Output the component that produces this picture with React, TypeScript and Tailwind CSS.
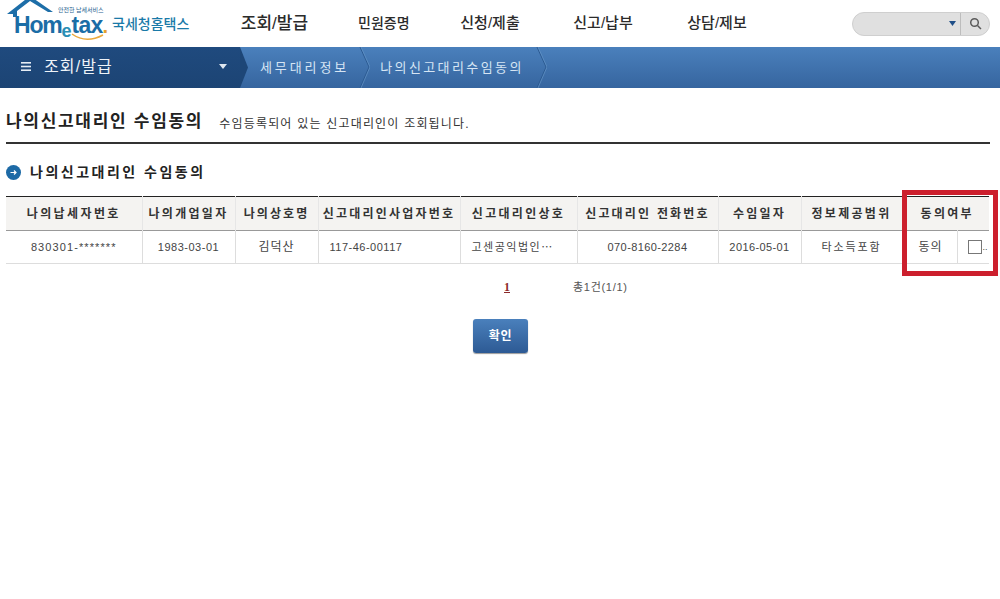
const kr = 'font-["Liberation_Sans","Noto_Sans_CJK_KR",sans-serif]';

const navItems = [
  { label: '조회/발급', cls: 'w-[71px] mr-[48px] text-[17px]' },
  { label: '민원증명', cls: 'w-[51px] mr-[50px] text-[14px]' },
  { label: '신청/제출', cls: 'w-[62px] mr-[51px] text-[15px]' },
  { label: '신고/납부', cls: 'w-[62px] mr-[52px] text-[15px]' },
  { label: '상담/제보', cls: 'w-[62px] text-[15px]' },
];

const headers = [
  { label: '나의납세자번호', track: 'tracking-[2.4px]' },
  { label: '나의개업일자', track: 'tracking-[2.3px]' },
  { label: '나의상호명', track: 'tracking-[2.1px]' },
  { label: '신고대리인사업자번호', track: 'tracking-[2.2px]' },
  { label: '신고대리인상호', track: 'tracking-[2.3px]' },
  { label: '신고대리인 전화번호', track: 'tracking-[2.2px]' },
  { label: '수임일자', track: 'tracking-[2.2px]' },
  { label: '정보제공범위', track: 'tracking-[2.3px]' },
];

const colWidths = ['w-[136px]', 'w-[93px]', 'w-[83px]', 'w-[142px]', 'w-[117px]', 'w-[141px]', 'w-[83px]', 'w-[101px]', 'w-[55px]', 'w-[32px]'];

const cells = [
  { text: '830301-*******', cls: 'text-center tracking-[1.1px]' },
  { text: '1983-03-01', cls: 'text-center tracking-[0.5px]' },
  { text: '김덕산', cls: 'text-center text-[12px] tracking-[1px]' },
  { text: '117-46-00117', cls: 'pl-[11px] text-left tracking-[0.5px]' },
  { text: '고센공익법인⋯', cls: 'pl-[11px] text-left tracking-[1.5px]' },
  { text: '070-8160-2284', cls: 'text-center tracking-[0.4px]' },
  { text: '2016-05-01', cls: 'text-center tracking-[0.4px]' },
  { text: '타소득포함', cls: 'text-center tracking-[1.9px]' },
];

function Logo() {
  return (
    <div className="relative h-[47px] w-[239px] shrink-0">
      <svg className="absolute left-[6px] top-0" width="50" height="18" viewBox="0 0 50 18">
        <path d="M1 14 L24 -4 L47 12 L42 12 L24 1 L11 11 L11 17 L7 17 L7 14 Z" fill="#1d6ea8" />
      </svg>
      <span className="absolute left-[58px] top-[6px] text-[6px] leading-[7px] text-[#1f5f8f] font-['Noto_Sans_CJK_KR',sans-serif]">
        안전한 납세서비스
      </span>
      <div className="absolute left-[14px] top-[12px] flex items-baseline font-['Liberation_Sans',sans-serif] font-bold leading-[26px] text-[#1b6da6]">
        <span className="text-[23px] tracking-[-1.2px]">Hom</span>
        <span className="relative top-[4px] text-[18px] text-[#2a8fb5]">e</span>
        <span className="text-[23px] tracking-[-0.8px]">tax</span>
        <span className="text-[20px] text-[#e6a02c]">.</span>
      </div>
      <svg className="absolute left-[70px] top-[33px]" width="36" height="9" viewBox="0 0 36 9">
        <path d="M2 1 Q16 11 33 2" fill="none" stroke="#eba93c" strokeWidth="1.5" />
      </svg>
      <span className={`absolute left-[112px] top-[15px] text-[14px] font-medium leading-[18px] tracking-[0px] text-[#1a7aa8] ${kr}`}>
        국세청홈택스
      </span>
    </div>
  );
}

function Chevron() {
  return (
    <svg className="mx-[10px] shrink-0" width="11" height="41" viewBox="0 0 11 41">
      <path d="M1 0 L10 20 L1 41" fill="none" stroke="#2c5a92" strokeWidth="1" />
      <path d="M2 0 L11 20 L2 41" fill="none" stroke="#6a9acb" strokeWidth="0.6" />
    </svg>
  );
}

export default function App() {
  return (
    <div className={`relative h-[599px] w-[1000px] overflow-hidden bg-white ${kr}`}>
      <header className="flex h-[47px] items-center">
        <Logo />
        <nav className="flex items-center">
          {navItems.map((n) => (
            <span
              key={n.label}
              className={`whitespace-nowrap text-center font-medium text-[#2b2b2b] ${n.cls}`}
            >
              {n.label}
            </span>
          ))}
        </nav>
        <div className="ml-[104px] flex h-[24px] w-[138px] items-center rounded-full border border-[#cfcfcf] bg-[#e0e0e0]">
          <div className="flex flex-1 justify-end pr-[4px]">
            <svg width="7" height="5" viewBox="0 0 7 5">
              <path d="M0 0 H7 L3.5 5 Z" fill="#1f4f88" />
            </svg>
          </div>
          <div className="flex h-full w-[29px] items-center justify-center border-l border-[#bdbdbd]">
            <svg width="13" height="13" viewBox="0 0 13 13" fill="none" stroke="#5c5c5c" strokeWidth="1.5">
              <circle cx="5.5" cy="5.5" r="3.8" />
              <path d="M8.5 8.5 L12 12" />
            </svg>
          </div>
        </div>
      </header>

      <div className="flex h-[41px] items-stretch bg-gradient-to-b from-[#4a80bc] to-[#36659f]">
        <div className="flex w-[240px] items-center bg-gradient-to-b from-[#1f4a7e] to-[#1c4474] pb-[2px] pl-[21px] text-white">
          <svg width="10" height="9" viewBox="0 0 10 9" fill="#e6edf5">
            <rect width="10" height="1.6" />
            <rect y="3.7" width="10" height="1.6" />
            <rect y="7.4" width="10" height="1.6" />
          </svg>
          <span className="ml-[13px] flex-1 text-[16px] tracking-[1.1px] text-[#eef3f8]">조회/발급</span>
          <svg className="mr-[13px]" width="8" height="5" viewBox="0 0 8 5">
            <path d="M0 0 H8 L4 5 Z" fill="#dfe7f0" />
          </svg>
        </div>
        <svg className="shrink-0" width="8" height="41" viewBox="0 0 8 41">
          <path d="M0 0 L8 20.5 L0 41 Z" fill="#1d4677" />
        </svg>
        <span className="ml-[12px] self-center text-[13px] tracking-[2.9px] text-[#d6e5f4]">세무대리정보</span>
        <Chevron />
        <span className="mr-[2px] self-center text-[13px] tracking-[2.4px] text-[#d6e5f4]">나의신고대리수임동의</span>
        <Chevron />
      </div>

      <main className="pl-[6px] pr-[10px]">
        <div className="flex h-[56px] items-center border-b-2 border-[#333333] pt-[13px]">
          <h1 className="text-[17px] font-bold tracking-[1.7px] text-[#222222]">나의신고대리인 수임동의</h1>
          <p className="ml-[16px] mt-[4px] text-[12px] tracking-[1.2px] text-[#333333]">
            수임등록되어 있는 신고대리인이 조회됩니다.
          </p>
        </div>

        <div className="mt-[17px] flex h-[22px] items-center">
          <span className="flex h-[15px] w-[15px] items-center justify-center rounded-full bg-[#1d6aa6]">
            <svg width="7" height="7" viewBox="0 0 7 7" fill="none" stroke="#ffffff" strokeWidth="1.2">
              <path d="M0.5 3.5 H6 M4 1.5 L6 3.5 L4 5.5" />
            </svg>
          </span>
          <h2 className="ml-[9px] text-[14px] font-bold tracking-[2.5px] text-[#222222]">나의신고대리인 수임동의</h2>
        </div>

        <table className="mt-[13px] w-[983px] table-fixed border-collapse border-t border-[#222222] text-[11px] text-[#444444]">
          <colgroup>
            {colWidths.map((w, i) => (
              <col key={i} className={w} />
            ))}
          </colgroup>
          <thead>
            <tr className="h-[34px] border-b border-[#999999] bg-[#f4f3f1]">
              {headers.map((h) => (
                <th
                  key={h.label}
                  className={`whitespace-nowrap border-r border-[#e6e6e6] p-0 text-center text-[12px] font-bold text-[#333333] ${h.track}`}
                >
                  {h.label}
                </th>
              ))}
              <th colSpan={2} className="p-0 pl-[3px] text-center text-[12px] font-bold tracking-[2.3px] text-[#333333]">
                동의여부
              </th>
            </tr>
          </thead>
          <tbody>
            <tr className="h-[33px] border-b border-[#dddddd]">
              {cells.map((c) => (
                <td key={c.text} className={`whitespace-nowrap border-r border-[#dddddd] p-0 ${c.cls}`}>
                  {c.text}
                </td>
              ))}
              <td className="border-r border-[#dddddd] p-0 pl-[16px] text-left text-[12px] tracking-[1px]">동의</td>
              <td className="p-0 pl-[10px]">
                <div className="flex items-center">
                  <span className="h-[14px] w-[14px] border border-[#777777] bg-white" />
                  <span className="ml-[1px] text-[9px] leading-[9px]">..</span>
                </div>
              </td>
            </tr>
          </tbody>
        </table>

        <div className="mt-[15px] flex h-[16px] items-center text-[11px]">
          <span className="ml-[498px] font-['Liberation_Serif',serif] text-[12px] font-bold text-[#8b2a2a] underline">1</span>
          <span className="ml-[63px] tracking-[0.7px] text-[#555555]">총1건(1/1)</span>
        </div>

        <div className="mt-[24px] flex">
          <button className="ml-[467px] h-[34px] w-[55px] rounded-[3px] bg-gradient-to-b from-[#4a80bc] to-[#2d5a94] text-[12px] font-bold tracking-[0.8px] text-white shadow-[0_1px_1px_rgba(0,0,0,0.4)]">
            확인
          </button>
        </div>
      </main>

      {/* 캡처에 표시된 빨간 강조 박스 */}
      <div className="absolute left-[902px] top-[190px] h-[86px] w-[96px] border-[5px] border-[#cc1f2d]" />
    </div>
  );
}
